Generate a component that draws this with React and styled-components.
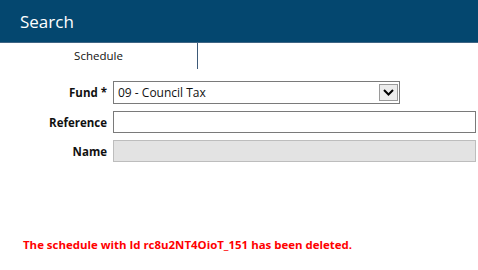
import React from "react";
import styled, { createGlobalStyle } from "styled-components";

const GlobalStyle = createGlobalStyle`
  html, body {
    margin: 0;
    padding: 0;
    background: #fff;
    font-family: "Open Sans", "Noto Sans", sans-serif;
  }
`;

const Page = styled.div`
  width: 478px;
  height: 270px;
  overflow: hidden;
  background: #fff;
`;

const Header = styled.div`
  height: 42px;
  background: #04476f;
  border-bottom: 1px solid #3f6584;
  display: flex;
  align-items: center;
  padding-left: 20px;
  color: #fff;
  font-size: 17px;
`;

const Tabs = styled.div`
  display: flex;
  height: 26px;
`;

const Tab = styled.div`
  width: 198px;
  border-right: 1px solid #3d5a78;
  display: flex;
  align-items: center;
  justify-content: center;
  font-size: 11.5px;
  color: #111;
  padding-bottom: 2px;
  box-sizing: border-box;
`;

const Form = styled.div`
  display: grid;
  grid-template-columns: 107px 1fr;
  column-gap: 6px;
  row-gap: 7px;
  padding: 12px 2px 0 0;
  align-items: center;
`;

const Label = styled.label`
  text-align: right;
  font-weight: 700;
  font-size: 11.5px;
  color: #111;
`;

const SelectBox = styled.div`
  width: 287px;
  height: 23px;
  box-sizing: border-box;
  border: 1px solid #7a7a7a;
  display: flex;
  align-items: center;
  justify-content: space-between;
  padding: 0 1px 0 4px;
  font-size: 12px;
  color: #111;
`;

const DropButton = styled.div`
  width: 19px;
  height: 17px;
  box-sizing: border-box;
  border: 1px solid #9a9a9a;
  background: #ececec;
  display: flex;
  align-items: center;
  justify-content: center;
`;

const Input = styled.div`
  height: 22px;
  box-sizing: border-box;
  border: 1px solid ${(p) => (p.$disabled ? "#bdbdbd" : "#7a7a7a")};
  background: ${(p) => (p.$disabled ? "#e3e3e3" : "#fff")};
`;

const Message = styled.div`
  margin-top: 75px;
  padding-left: 23px;
  color: #f00;
  font-weight: 700;
  font-size: 11.45px;
`;

export default function App() {
  return (
    <Page>
      <GlobalStyle />
      <Header>Search</Header>
      <Tabs>
        <Tab>Schedule</Tab>
      </Tabs>
      <Form>
        <Label>Fund *</Label>
        <SelectBox>
          <span>09 - Council Tax</span>
          <DropButton>
            <svg width="11" height="7" viewBox="0 0 11 7">
              <path d="M1 1 L5.5 5.5 L10 1" fill="none" stroke="#000" strokeWidth="2" />
            </svg>
          </DropButton>
        </SelectBox>
        <Label>Reference</Label>
        <Input />
        <Label>Name</Label>
        <Input $disabled />
      </Form>
      <Message>The schedule with Id rc8u2NT4OioT_151 has been deleted.</Message>
    </Page>
  );
}
